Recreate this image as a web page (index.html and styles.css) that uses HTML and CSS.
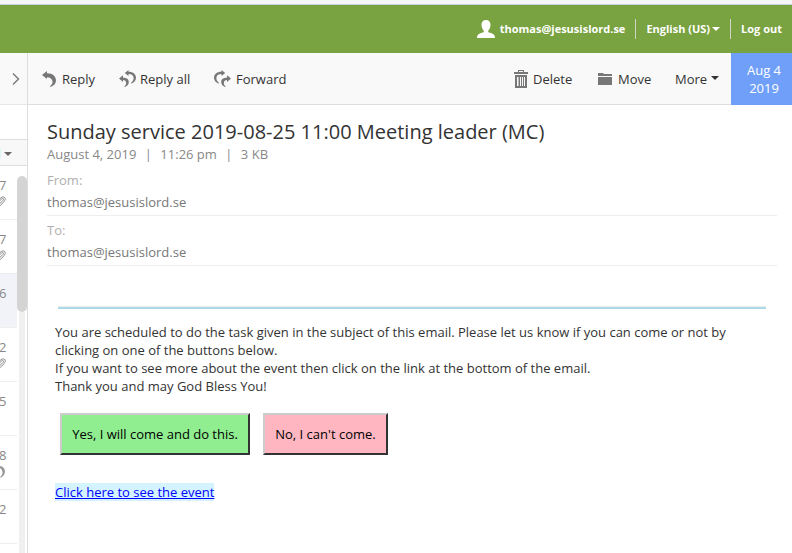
FILE: index.html
```html
<!DOCTYPE html>
<html lang="en">
<head>
<meta charset="utf-8">
<title>Mail</title>
<link rel="stylesheet" href="styles.css">
</head>
<body>
<div class="strip"></div>
<header class="top">
  <svg class="user" width="18" height="18" viewBox="0 0 18 18"><path fill="#fff" d="M9 0c3 0 4.700 2 4.500 5-.1 2.600-1 4.300-2.200 5.500v1.800c2.700.8 5.200 1.500 6.200 3.200.4.700.5 1.700.5 2.500H0c0-.8.100-1.800.5-2.500 1-1.700 3.500-2.400 6.200-3.200v-1.800C5.500 9.300 4.600 7.600 4.500 5 4.300 2 6 0 9 0z"/></svg>
  <span class="account">thomas@jesusislord.se</span>
  <i class="divider"></i>
  <span class="language">English (US)</span><i class="caret light"></i>
  <i class="divider"></i>
  <span class="logout">Log out</span>
</header>
<div class="main">
  <aside class="side">
    <div class="expand"><svg width="8" height="12" viewBox="0 0 8 12"><path d="M1 .5L6.500 6 1 11.500" fill="none" stroke="#777" stroke-width="1.400"/></svg></div>
    <div class="search"></div>
    <div class="filter"><i class="tint"></i><i class="caret gray"></i></div>
    <div class="list">
      <div class="rows">
        <div class="row"><span>7</span><svg class="clip" width="6" height="11" viewBox="0 0 6 11"><path d="M0 2.500C1.500 1 3.500.300 4.800 1.700 6.200 3.500 4.500 5.200 0 9.800M0 4.500c2-2.200 3-2.300 3.400-1.700.5.800-.5 2-3.400 4.500" fill="none" stroke="#888"/></svg></div>
        <div class="row"><span>7</span><svg class="clip" width="6" height="11" viewBox="0 0 6 11"><path d="M0 2.500C1.500 1 3.500.300 4.800 1.700 6.200 3.500 4.500 5.200 0 9.800M0 4.500c2-2.200 3-2.300 3.400-1.700.5.800-.5 2-3.400 4.500" fill="none" stroke="#888"/></svg></div>
        <div class="row selected"><span>6</span></div>
        <div class="row"><span>2</span><svg class="clip" width="6" height="11" viewBox="0 0 6 11"><path d="M0 2.500C1.500 1 3.500.300 4.800 1.700 6.200 3.500 4.500 5.200 0 9.800M0 4.500c2-2.200 3-2.300 3.400-1.700.5.800-.5 2-3.400 4.500" fill="none" stroke="#888"/></svg></div>
        <div class="row"><span>5</span></div>
        <div class="row"><span>8</span><svg class="clip" width="6" height="12" viewBox="0 0 6 12"><path d="M0 0c3 .3 5 2.500 5 5.500 0 2.800-1.800 5.200-4.500 6.300L0 11.300c1.800-1.500 2.700-3.300 2.500-5C2.300 4.500 1.400 2.700 0 2.200z" fill="#999"/></svg></div>
        <div class="row"><span>2</span></div>
        <div class="row"></div>
      </div>
      <div class="scroll"><div class="thumb"></div><div class="track"></div></div>
    </div>
  </aside>
  <main class="message">
    <nav class="tools">
      <div class="tool reply"><svg width="14" height="16" viewBox="0 0 14 16"><path d="M0 4L5 0v2.300C10.700 2.200 14 5.300 14 9.600c0 3-2 5.300-5.500 6.400l-.5-.8c2-1.500 2.700-2.900 2.500-4.900C10.200 7.900 8.300 6.200 5 6.200V8z"/></svg><span>Reply</span></div>
      <div class="tool reply-all"><svg width="17" height="17" viewBox="0 0 17 17"><path d="M0 8.600L4 5.200v2.500c4 0 5.800 1.600 5.800 4.200 0 2.200-1.300 3.900-3.900 5.100l-.6-.6c1.500-1.200 2-2.200 1.800-3.700C6.900 10.800 6 10 4 9.900V12zM5.800 3L9.500 0v1.700c4.900 0 7.500 2.600 7.500 6.100 0 2.500-1.700 4.600-4.400 5.800l-.7-.7c1.900-1.500 2.900-3 2.700-4.900C14.400 5.500 12.900 4.100 9.500 4.100v1.900z"/></svg><span>Reply all</span></div>
      <div class="tool forward"><svg width="17" height="17" viewBox="0 0 17 17"><path transform="translate(17) scale(-1 1)" d="M0 8.600L4 5.200v2.500c4 0 5.800 1.600 5.800 4.200 0 2.200-1.300 3.900-3.900 5.100l-.6-.6c1.500-1.200 2-2.200 1.800-3.700C6.900 10.800 6 10 4 9.900V12zM5.800 3L9.500 0v1.700c4.900 0 7.500 2.600 7.500 6.100 0 2.500-1.700 4.600-4.400 5.800l-.7-.7c1.900-1.500 2.900-3 2.700-4.900C14.400 5.500 12.900 4.100 9.500 4.100v1.900z"/></svg><span>Forward</span></div>
      <div class="tool delete"><svg width="14" height="18" viewBox="0 0 14 18"><path fill-rule="evenodd" d="M4 0h6v2h4v2H0V2h4zm1 1v1h4V1zM1 5h12v13H1zm2 2v9h1.500V7zm3 0v9h1V7zm2 0v9h1V7zm2 0v9h1V7z"/></svg><span>Delete</span></div>
      <div class="tool move"><svg width="14" height="12" viewBox="0 0 14 12"><path d="M0 0h5l1 1h8v2H0zM0 4h14v8H0z"/></svg><span>Move</span></div>
      <div class="tool more"><span>More</span><i class="caret dark"></i></div>
      <div class="date">Aug 4<br>2019</div>
    </nav>
    <section class="head">
      <h1>Sunday service 2019-08-25 11:00 Meeting leader (MC)</h1>
      <div class="meta"><span>August 4, 2019</span><b>|</b><span>11:26 pm</span><b>|</b><span>3 KB</span></div>
      <div class="person from"><div class="label">From:</div><div>thomas@jesusislord.se</div></div>
      <div class="person"><div class="label">To:</div><div>thomas@jesusislord.se</div></div>
    </section>
    <article class="body">
      <div class="rule"></div>
      <p>You are scheduled to do the task given in the subject of this email. Please let us know if you can come or not by<br>clicking on one of the buttons below.<br>If you want to see more about the event then click on the link at the bottom of the email.<br>Thank you and may God Bless You!</p>
      <div class="answers"><button class="yes">Yes, I will come and do this.</button><button class="no">No, I can't come.</button></div>
      <a href="#">Click here to see the event</a>
    </article>
  </main>
</div>
</body>
</html>
```
FILE: styles.css
```css
* { box-sizing: border-box; }
body { margin: 0; height: 553px; overflow: hidden; background: #fff; font: 13px/18px "Open Sans", sans-serif; color: #333; }
svg { display: block; flex: none; }
.strip { height: 5px; background: #f4f6f7; border-bottom: 1px solid #c5d0e2; }
.top { height: 48px; background: #79a240; color: #fff; display: flex; align-items: center; justify-content: flex-end; padding-right: 10px; font-size: 11px; font-weight: 700; white-space: nowrap; }
.user { margin-right: 5px; }
.divider { width: 1px; height: 20px; background: #d0d5c8; margin: 0 10px; }
.caret { flex: none; width: 0; height: 0; border: 4px solid transparent; border-bottom: 0; border-top-color: currentColor; }
.light { margin-left: 2px; }
.main { display: flex; height: 500px; }
.side { width: 28px; flex: none; border-right: 1px solid #ddd; display: flex; flex-direction: column; }
.expand { height: 52px; background: #f9f9f9; border-bottom: 1px solid #e6e6e6; display: flex; align-items: center; padding-left: 12px; }
.search { height: 34px; }
.filter { height: 27px; border: solid #ddd; border-width: 1px 0; background: #f8f8f8; display: flex; align-items: center; gap: 3px; color: #666; }
.gray { margin-top: 2px; }
.tint { width: 1px; height: 10px; background: #dff6f9; }
.list { flex: 1; display: flex; min-height: 0; overflow: hidden; }
.rows { width: 17px; }
.row { height: 54px; border-bottom: 1px solid #eee; padding-top: 10px; color: #888; }
.row span { display: block; margin-left: -1px; height: 18px; }
.clip { margin-top: 2px; }
.selected { background: #f1f3f8; }
.scroll { width: 10px; padding-top: 10px; }
.thumb { height: 136px; background: #d4d4d4; border-radius: 5px; }
.track { width: 6px; height: 260px; margin-left: 2px; background: #f0f0f0; }
.message { flex: 1; min-width: 0; }
.tools { height: 52px; background: #f9f9f9; border-bottom: 1px solid #ddd; display: flex; align-items: center; padding-left: 14px; }
.tool { display: flex; align-items: center; height: 20px; white-space: nowrap; }
.tool svg { fill: #777; }
.reply { width: 77px; gap: 6px; }
.reply-all { width: 95px; gap: 4px; }
.forward { gap: 5px; }
.delete { margin-left: auto; width: 84px; gap: 5px; }
.move { width: 77px; gap: 6px; }
.more { width: 56px; gap: 4px; }
.dark { margin-top: -1px; }
.date { width: 61px; height: 52px; align-self: flex-start; flex: none; background: #6f9ff8; color: #fff; text-align: center; padding: 8px 0 0 5px; }
.head { padding: 14px 15px 0 19px; }
h1 { margin: 0; font-size: 20px; line-height: 26px; font-weight: 400; white-space: nowrap; }
.meta { display: flex; color: #888; height: 18px; margin-bottom: 6px; }
.meta b { font-weight: 400; width: 24px; text-align: center; }
.person { height: 50px; padding-top: 3px; border-bottom: 1px solid #eee; color: #777; line-height: 22px; }
.from { height: 47px; padding-top: 0; margin-top: 1px; }
.label { color: #b0b0b0; }
.body { padding: 40px 25px 0 27px; }
.rule { height: 3px; margin: 0 1px 0 3px; background: #add8e6; border-top: 1px solid #eee; }
p { margin: 14px 0 18px; white-space: nowrap; }
.answers { display: flex; gap: 13px; margin: 0 0 28px 5px; }
button { height: 42px; padding: 0; border: 2px solid; border-color: #ccc #333 #333 #ccc; font: inherit; color: #000; }
.yes { width: 190px; background: #90ee90; }
.no { width: 125px; background: #ffb6c1; }
a { display: inline-block; background: #d3f3ff; color: #00f; }
```
